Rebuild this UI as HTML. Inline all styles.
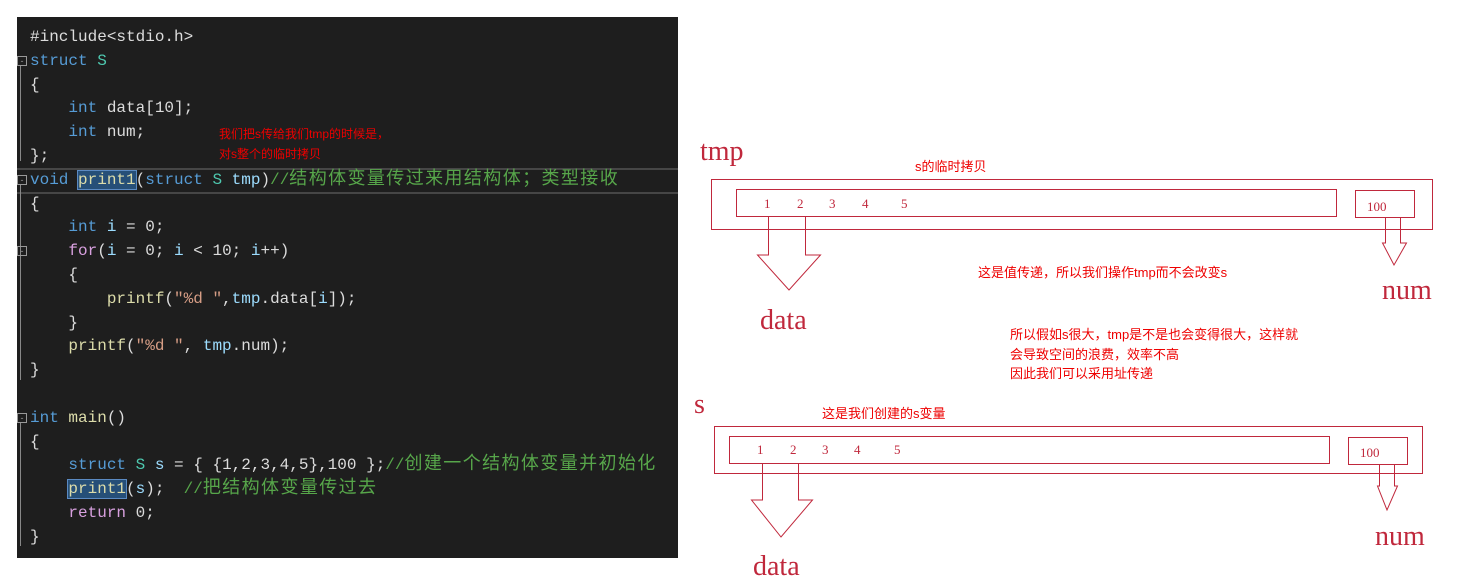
<!DOCTYPE html><html><head><meta charset="utf-8"><style>
body{margin:0;width:1464px;height:587px;background:#fff;position:relative;overflow:hidden;font-family:"Liberation Serif","Noto Serif CJK SC",serif}
#ed{position:absolute;left:17px;top:17px;width:661px;height:541px;background:#1e1e1e;overflow:hidden}
#code{position:absolute;left:13px;top:9px;font-family:"Liberation Mono","Noto Sans CJK SC",monospace;font-size:16px;line-height:23.8px;color:#dcdcdc;white-space:pre}
.k{color:#569cd6}.t{color:#4ec9b0}.c{color:#57a64a}.s{color:#d69d85}.p{color:#d8a0df}.f{color:#dcdcaa}.v{color:#9cdcfe}
.cj{font-size:18px;letter-spacing:1.4px;line-height:0}
.sel{background:#264f78;outline:1px solid #5b8ac2}
.hl{position:absolute;left:0;top:151px;width:661px;height:22px;border-top:2px solid #464646;border-bottom:2px solid #464646}
.r{position:absolute;color:#e00;font-size:13px;font-family:"Liberation Sans","Noto Sans CJK SC",sans-serif;white-space:nowrap}
.big{position:absolute;color:#c0283c;font-size:28px;font-family:"Liberation Serif",serif}
.n{position:absolute;color:#c0283c;font-size:13px;font-family:"Liberation Serif",serif}
.fold{position:absolute;left:0;width:8px;height:8px;border:1px solid #999;color:#999;font-size:9px;line-height:8px;text-align:center;font-family:sans-serif}
.gl{position:absolute;left:3px;border-left:1px solid #888}
</style></head><body>
<div id="ed">
<div class="hl"></div>
<div class="fold" style="top:39px">-</div>
<div class="gl" style="top:49px;height:95px"></div>
<div class="fold" style="top:158px">-</div>
<div class="gl" style="top:168px;height:195px"></div>
<div class="fold" style="top:229px">-</div>
<div class="fold" style="top:396px">-</div>
<div class="gl" style="top:406px;height:123px"></div>
<div id="code"><span>#include&lt;stdio.h&gt;</span>
<span class="k">struct</span> <span class="t">S</span>
{
    <span class="k">int</span> data[10];
    <span class="k">int</span> num;
};
<span class="k">void</span> <span class="sel f">print1</span>(<span class="k">struct</span> <span class="t">S</span> <span class="v">tmp</span>)<span class="c">//<span class="cj">结构体变量传过来用结构体；类型接收</span></span>
{
    <span class="k">int</span> <span class="v">i</span> = 0;
    <span class="p">for</span>(<span class="v">i</span> = 0; <span class="v">i</span> &lt; 10; <span class="v">i</span>++)
    {
        <span class="f">printf</span>(<span class="s">"%d "</span>,<span class="v">tmp</span>.data[<span class="v">i</span>]);
    }
    <span class="f">printf</span>(<span class="s">"%d "</span>, <span class="v">tmp</span>.num);
}

<span class="k">int</span> <span class="f">main</span>()
{
    <span class="k">struct</span> <span class="t">S</span> <span class="v">s</span> = { {1,2,3,4,5},100 };<span class="c">//<span class="cj">创建一个结构体变量并初始化</span></span>
    <span class="sel f">print1</span>(<span class="v">s</span>);  <span class="c">//<span class="cj">把结构体变量传过去</span></span>
    <span class="p">return</span> 0;
}</div>
</div>
<div class="r" style="left:219px;top:125px;font-size:12px">我们把s传给我们tmp的时候是，</div>
<div class="r" style="left:219px;top:145px;font-size:12px">对s整个的临时拷贝</div>

<svg style="position:absolute;left:0;top:0" width="1464" height="587">
<g fill="none" stroke="#c0283c" stroke-width="1">
<rect x="711.5" y="179.5" width="721" height="50"/>
<rect x="736.5" y="189.5" width="600" height="27"/>
<rect x="1355.5" y="190.5" width="59" height="27"/>
<path d="M768.5 217 V255 H757.5 L789 290 L820.5 255 H805.5 V217"/>
<path d="M1385.5 217 V243 H1382.5 L1394 265 L1406.5 243 H1400.5 V217"/>
<rect x="714.5" y="426.5" width="708" height="47"/>
<rect x="729.5" y="436.5" width="600" height="27"/>
<rect x="1348.5" y="437.5" width="59" height="27"/>
<path d="M762.5 463 V500 H751.5 L781 537 L812.5 500 H798.5 V463"/>
<path d="M1379.5 464 V486 H1377.5 L1387 510 L1397.5 486 H1394.5 V464"/>
</g></svg>
<div class="big" style="left:700px;top:136px">tmp</div>
<div class="r" style="left:915px;top:156px">s的临时拷贝</div>
<div class="n" style="left:764px;top:196px">1</div><div class="n" style="left:797px;top:196px">2</div><div class="n" style="left:829px;top:196px">3</div><div class="n" style="left:862px;top:196px">4</div><div class="n" style="left:901px;top:196px">5</div>
<div class="n" style="left:1367px;top:199px">100</div>
<div class="r" style="left:978px;top:262px">这是值传递，所以我们操作tmp而不会改变s</div>
<div class="big" style="left:1382px;top:275px">num</div>
<div class="big" style="left:760px;top:305px">data</div>
<div class="r" style="left:1010px;top:324px">所以假如s很大，tmp是不是也会变得很大，这样就</div>
<div class="r" style="left:1010px;top:344px">会导致空间的浪费，效率不高</div>
<div class="r" style="left:1010px;top:363px">因此我们可以采用址传递</div>
<div class="big" style="left:694px;top:389px">s</div>
<div class="r" style="left:822px;top:403px">这是我们创建的s变量</div>
<div class="n" style="left:757px;top:442px">1</div><div class="n" style="left:790px;top:442px">2</div><div class="n" style="left:822px;top:442px">3</div><div class="n" style="left:854px;top:442px">4</div><div class="n" style="left:894px;top:442px">5</div>
<div class="n" style="left:1360px;top:445px">100</div>
<div class="big" style="left:1375px;top:521px">num</div>
<div class="big" style="left:753px;top:551px">data</div>
</body></html>
